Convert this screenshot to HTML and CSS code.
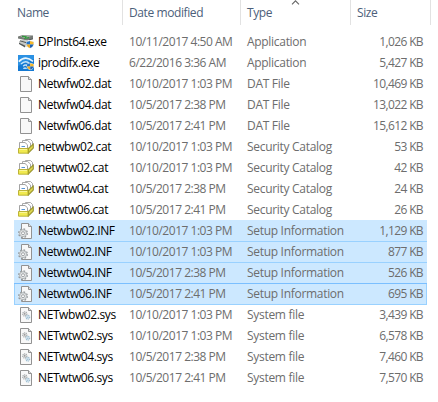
FILE: index.html
```
<!DOCTYPE html>
<html lang="en">
<head>
<meta charset="utf-8">
<title>Files</title>
<link rel="stylesheet" href="styles.css">
</head>
<body>
<svg class="defs" aria-hidden="true">
  <symbol id="shield" viewBox="0 0 8 8">
    <path d="M4 0L8 1.2V4Q7.6 6.6 4 8Q.4 6.6 0 4V1.2Z" fill="#dfe8f0"/>
    <path d="M4 .5V4H.5V1.5Z" fill="#2675c7"/><path d="M4 .5L7.5 1.5V4H4Z" fill="#f5b829"/>
    <path d="M.5 4H4V7.5Q1 6.4.5 4Z" fill="#efaa20"/><path d="M4 4H7.5Q7 6.4 4 7.5Z" fill="#1d62b5"/>
  </symbol>
  <symbol id="dpinst" viewBox="0 0 16 16">
    <path d="M0 2.5L4 1.3L15 1.5V5L9 6.5L0 4.5Z" fill="#777b77"/>
    <path d="M2 2.6L6 1.8L13 2.6L8 4.5Z" fill="#a9b5a8"/>
    <path d="M4 2.4L8 2.7L7 4.2L11 3.6" fill="none" stroke="#2f9a3b" stroke-width="1.1"/>
    <path d="M1 7.2L5 5.8L10 7V12L7 13L1 9.5Z" fill="#c5c8c6"/>
    <path d="M1 8.7L7 11.6V13.4L1 10Z" fill="#555a5a"/>
    <path d="M2 6.8L8 8.6M11 5.8L15 4.8" stroke="#555a5a"/>
    <use href="#shield" x="8" y="6" width="8" height="9"/>
  </symbol>
  <symbol id="wifi" viewBox="0 0 16 16">
    <path d="M0 0H16V16H0Z" fill="#1479d2"/><path d="M0 0H16V4L0 11Z" fill="#2b91e3"/>
    <path d="M.8 6.6Q7.5 -.2 15 6.4" fill="none" stroke="#e9f5fd" stroke-width="1.7"/>
    <path d="M3 9Q7.5 4.4 12 8.8M5.2 11.2Q7.5 9 9.8 11.2" fill="none" stroke="#c6e4f8" stroke-width="1.4"/>
    <path d="M5 14Q5 12.2 7 12.2Q9 12.2 9 14Z" fill="#b9def6"/>
    <use href="#shield" x="8.5" y="7.5" width="7.5" height="8"/>
  </symbol>
  <symbol id="page" viewBox="0 0 16 16">
    <path d="M2.5 .5H10.5L13.5 3.5V15.5H2.5Z" fill="#f8f8f8" stroke="#929292"/>
    <path d="M10.5 .5V3.5H13.5" fill="#ddd" stroke="#929292"/>
  </symbol>
  <symbol id="cat" viewBox="0 0 16 16">
    <path d="M7.5 .5H12.5L14.5 2.5V8H7.5Z" fill="#fff" stroke="#a0a0a0" stroke-width=".9"/>
    <path d="M4.5 1.5H9.5L12.5 4V10H4.5Z" fill="#fff" stroke="#a0a0a0" stroke-width=".9"/>
    <path d="M1.5 3.5H7L9.5 5.8V11H1.5Z" fill="#fff" stroke="#999" stroke-width=".9"/>
    <path d="M3.5 7.5H7" stroke="#5795d5"/>
    <path d="M10 9.5L15.5 4.5V9.3L10 14.7Z" fill="#a9a52f" stroke="#858223" stroke-width=".6"/>
    <path d="M11 10L14.6 6.7V8.8L11 12.3Z" fill="#e0d855"/>
    <path d="M.5 9.5H10V14.2H.5Z" fill="#f1ea50" stroke="#b5ad2b" stroke-width=".9"/>
    <path d="M1.5 10.5H9" stroke="#faf69b"/>
  </symbol>
  <symbol id="inf" viewBox="0 0 16 16">
    <path d="M3.5 .5H10.5L13.5 3.5V15.5H3.5Z" fill="#f8f8f8" stroke="#929292"/>
    <path d="M10.5 .5V3.5H13.5" fill="#ddd" stroke="#929292"/>
    <circle cx="5" cy="10.2" r="4.3" fill="#e9ebec" stroke="#8f9396" stroke-width="1.3" stroke-dasharray="1.69 1.69"/>
    <circle cx="5" cy="10.2" r="3.5" fill="#e3e5e6" stroke="#a5a9ab" stroke-width=".8"/>
    <circle cx="5" cy="10.2" r="1.5" fill="#fff" stroke="#8f9396" stroke-width=".8"/>
  </symbol>
  <symbol id="sys" viewBox="0 0 16 16">
    <use href="#page"/>
    <circle cx="6.8" cy="6.9" r="2" fill="#eee" stroke="#a6aaac" stroke-width="1.3" stroke-dasharray="1 .57"/>
    <circle cx="6.8" cy="6.9" r=".8" fill="#888"/>
    <circle cx="9.8" cy="10.2" r="1.8" fill="#e5f2fb" stroke="#9dbdd0" stroke-width="1.3" stroke-dasharray="1 .6"/>
    <circle cx="9.8" cy="10.2" r=".6" fill="#83a6bb"/>
  </symbol>
</svg>
<main class="list">
  <header class="head">
    <div class="th">Name</div>
    <div class="th th-date">Date modified</div>
    <div class="th th-type">Type<svg class="sort" viewBox="0 0 9 5"><path d="M1 4.3L4.5 .8L8 4.3" fill="none" stroke="#666" stroke-width="1.1"/></svg></div>
    <div class="th th-size">Size</div>
  </header>
  <div class="rows">
    <div class="row"><svg class="icon"><use href="#dpinst"/></svg><span class="name">DPInst64.exe</span><span class="date">10/11/2017 4:50 AM</span><span class="type">Application</span><span class="size">1,026 KB</span></div>
    <div class="row"><svg class="icon"><use href="#wifi"/></svg><span class="name">iprodifx.exe</span><span class="date">6/22/2016 3:36 AM</span><span class="type">Application</span><span class="size">5,427 KB</span></div>
    <div class="row"><svg class="icon"><use href="#page"/></svg><span class="name">Netwfw02.dat</span><span class="date">10/10/2017 1:03 PM</span><span class="type">DAT File</span><span class="size">10,469 KB</span></div>
    <div class="row"><svg class="icon"><use href="#page"/></svg><span class="name">Netwfw04.dat</span><span class="date">10/5/2017 2:38 PM</span><span class="type">DAT File</span><span class="size">13,022 KB</span></div>
    <div class="row"><svg class="icon"><use href="#page"/></svg><span class="name">Netwfw06.dat</span><span class="date">10/5/2017 2:41 PM</span><span class="type">DAT File</span><span class="size">15,612 KB</span></div>
    <div class="row"><svg class="icon"><use href="#cat"/></svg><span class="name">netwbw02.cat</span><span class="date">10/10/2017 1:03 PM</span><span class="type">Security Catalog</span><span class="size">53 KB</span></div>
    <div class="row"><svg class="icon"><use href="#cat"/></svg><span class="name">netwtw02.cat</span><span class="date">10/10/2017 1:03 PM</span><span class="type">Security Catalog</span><span class="size">42 KB</span></div>
    <div class="row"><svg class="icon"><use href="#cat"/></svg><span class="name">netwtw04.cat</span><span class="date">10/5/2017 2:38 PM</span><span class="type">Security Catalog</span><span class="size">24 KB</span></div>
    <div class="row"><svg class="icon"><use href="#cat"/></svg><span class="name">netwtw06.cat</span><span class="date">10/5/2017 2:41 PM</span><span class="type">Security Catalog</span><span class="size">26 KB</span></div>
    <div class="row selected first"><svg class="icon"><use href="#inf"/></svg><span class="name">Netwbw02.INF</span><span class="date">10/10/2017 1:03 PM</span><span class="type">Setup Information</span><span class="size">1,129 KB</span></div>
    <div class="row selected"><svg class="icon"><use href="#inf"/></svg><span class="name">Netwtw02.INF</span><span class="date">10/10/2017 1:03 PM</span><span class="type">Setup Information</span><span class="size">877 KB</span></div>
    <div class="row selected"><svg class="icon"><use href="#inf"/></svg><span class="name">Netwtw04.INF</span><span class="date">10/5/2017 2:38 PM</span><span class="type">Setup Information</span><span class="size">526 KB</span></div>
    <div class="row selected focused"><svg class="icon"><use href="#inf"/></svg><span class="name">Netwtw06.INF</span><span class="date">10/5/2017 2:41 PM</span><span class="type">Setup Information</span><span class="size">695 KB</span></div>
    <div class="row"><svg class="icon"><use href="#sys"/></svg><span class="name">NETwbw02.sys</span><span class="date">10/10/2017 1:03 PM</span><span class="type">System file</span><span class="size">3,439 KB</span></div>
    <div class="row"><svg class="icon"><use href="#sys"/></svg><span class="name">NETwtw02.sys</span><span class="date">10/10/2017 1:03 PM</span><span class="type">System file</span><span class="size">6,578 KB</span></div>
    <div class="row"><svg class="icon"><use href="#sys"/></svg><span class="name">NETwtw04.sys</span><span class="date">10/5/2017 2:38 PM</span><span class="type">System file</span><span class="size">7,460 KB</span></div>
    <div class="row"><svg class="icon"><use href="#sys"/></svg><span class="name">NETwtw06.sys</span><span class="date">10/5/2017 2:41 PM</span><span class="type">System file</span><span class="size">7,570 KB</span></div>
  </div>
</main>
</body>
</html>
```
FILE: styles.css
```
* { box-sizing: border-box; }
body {
  margin: 0;
  background: #fff;
  font: 12px/20px "Open Sans", "Noto Sans", sans-serif;
}
.defs { display: none; }
.list { width: 438px; height: 402px; overflow: hidden; }
.head {
  display: grid;
  grid-template-columns: 109px 118px 110px 80px;
  height: 25px;
  margin: 0 0 7px 14px;
  color: #4c607a;
}
.th { position: relative; padding: 3px 0 0 6px; border-right: 1px solid #e2e2e2; letter-spacing: -0.4px; }
.th:first-child { padding-left: 3px; }
.sort { position: absolute; left: 50px; top: 0; width: 9px; height: 5px; }
.rows { margin-left: 14px; width: 413px; }
.row {
  display: grid;
  grid-template-columns: 20px 91px 118px 100px 76px;
  height: 21px;
  padding-left: 4px;
  color: #6d6d6d;
  white-space: nowrap;
}
.icon { width: 16px; height: 16px; margin-top: 2px; }
.name { color: #000; letter-spacing: -0.4px; }
.date { letter-spacing: -0.48px; }
.type { letter-spacing: -0.3px; }
.size { text-align: right; letter-spacing: -0.62px; }
.selected { background: #cce8ff; border-bottom: 1px solid #99d1ff; }
.first { box-shadow: 0 -1px #cce8ff; }
.focused { box-shadow: 0 -1px #7abfff, inset 1px 0 #99d1ff, inset -1px 0 #99d1ff; }
```
